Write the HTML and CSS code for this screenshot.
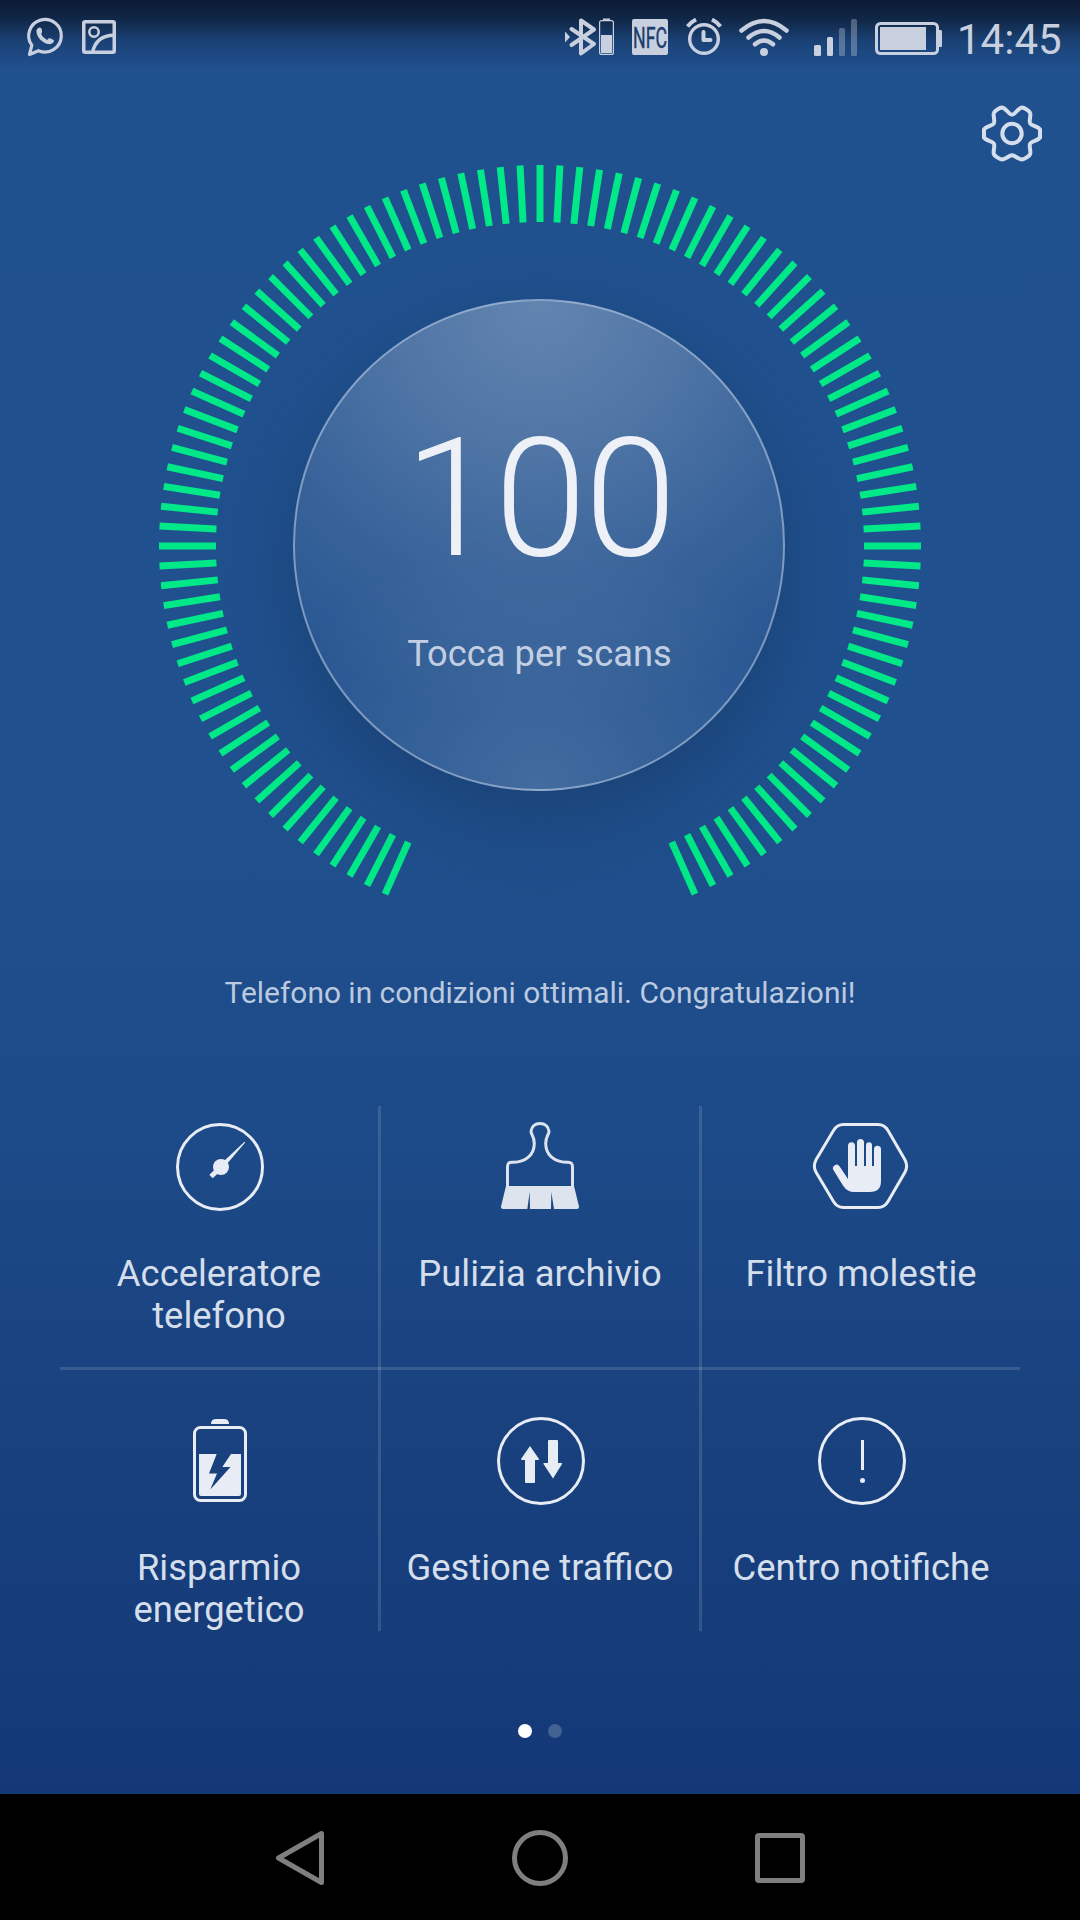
FILE: index.html
```
<!DOCTYPE html>
<html lang="it">
<head>
  <meta charset="UTF-8">
  <meta name="viewport" content="width=device-width, initial-scale=1.0">
  <title>Gestione telefono</title>
  <link rel="stylesheet" href="styles.css">
</head>
<body>
  <div class="app">
    <div class="statusbar">
      <svg class="st-whatsapp" width="36" height="40" viewBox="0 0 36 40" fill="none">
        <path d="M2.500 37.500 L4.800 28.300 A16.300 16.300 0 1 1 11.500 33.700 Z" stroke="currentColor" stroke-width="3.200" stroke-linejoin="round"/>
        <path d="M11 11.200 C12.500 10 14.300 10.700 14.800 12.600 C15.300 14.400 15.300 15.200 14.200 17 C15.500 19.800 17.500 21.700 20.300 22.900 C22 20.800 23 21 24.700 21.900 C27 23 27.500 23.300 26.500 25 C25.500 26.600 23.500 27.500 21 27 C15.500 26 10.500 21 9.500 15.500 C9.200 13.500 9.600 12.300 11 11.200 Z" fill="currentColor"/>
      </svg>
      <svg class="st-image" width="34" height="40" viewBox="0 0 34 40" fill="none" stroke="currentColor" stroke-width="3.500">
        <rect x="1.750" y="4.750" width="30.500" height="30.500" rx="1.500"/>
        <circle cx="12" cy="15" r="4.700" stroke-width="2.500"/>
        <path d="M10.500 35 C13 25 20 18.200 32 18.200"/>
      </svg>

      <div class="st-right">
        <svg class="st-bt" width="50" height="40" viewBox="0 0 50 40" fill="none">
          <path d="M0 14.500 L5 20 L0 25.500 Z" fill="currentColor"/>
          <path d="M6.500 12 L29 27 L16 36.500 V3.500 L29 12.500 L6.500 28" stroke="currentColor" stroke-width="4" stroke-linejoin="round" stroke-linecap="round"/>
          <rect x="34.600" y="3.600" width="13.800" height="33.800" rx="2" stroke="currentColor" stroke-width="1.200"/>
          <rect x="38" y="1.500" width="7" height="2" fill="currentColor"/>
          <rect x="36" y="18" width="11" height="18" fill="currentColor"/>
        </svg>
        <svg class="st-nfc" width="36" height="40" viewBox="0 0 36 40">
          <rect y="2" width="36" height="36" rx="2" fill="currentColor"/>
          <text class="nfc-text" x="1" y="30.500" textLength="34" lengthAdjust="spacingAndGlyphs">NFC</text>
        </svg>
        <svg class="st-alarm" width="36" height="40" viewBox="0 0 36 40" fill="none" stroke="currentColor">
          <circle cx="18" cy="22" r="14.300" stroke-width="3.400"/>
          <path d="M17.500 15 V23 H24.500" stroke-width="4" stroke-linecap="round" stroke-linejoin="round"/>
          <path d="M1.500 9.500 Q5 5 10 2.500 M34.500 9.500 Q31 5 26 2.500" stroke-width="4"/>
        </svg>
        <svg class="st-wifi" width="50" height="40" viewBox="0 0 50 40" fill="none" stroke="currentColor" stroke-width="4.500" stroke-linecap="round">
          <path d="M2.500 13.500 Q25 -5.500 47.500 13.500"/>
          <path d="M9.500 20.500 Q25 7.500 40.500 20.500"/>
          <path d="M16 27.300 Q25 19.700 34 27.300"/>
          <circle cx="25" cy="35" r="4" fill="currentColor" stroke="none"/>
        </svg>
        <svg class="st-signal" width="43" height="40" viewBox="0 0 43 40" fill="currentColor">
          <rect x="0" y="28" width="7" height="11" rx="1.500"/>
          <rect x="13" y="20" width="6" height="19" rx="1.500"/>
          <rect x="25" y="11" width="6" height="28" rx="1.500" opacity=".35"/>
          <rect x="37" y="2" width="6" height="37" rx="1.500" opacity=".35"/>
        </svg>
        <svg class="st-battery" width="67" height="40" viewBox="0 0 67 40">
          <rect x="1.500" y="6.500" width="61" height="30" rx="4" fill="none" stroke="currentColor" stroke-width="3"/>
          <rect x="5" y="10" width="46" height="23" fill="currentColor"/>
          <path d="M63.500 13 H66 Q67 13 67 14.500 V28.500 Q67 30 66 30 H63.500 Z" fill="currentColor"/>
        </svg>
        <span class="clock">14:45</span>
      </div>
    </div>

    <div class="toolbar">
      <svg class="gear" width="64" height="62" viewBox="0 0 64 62" fill="none" stroke="currentColor" stroke-width="4" stroke-linejoin="round">
        <path d="M32 11.700 C35 11.700 38 5 42 4.500 C44 4.500 50 8 50.300 10.500 C50.800 13.500 48.800 18 50.200 20.500 C51.700 23 58.500 23.500 60 26.500 V34.500 C58.500 37.500 51.700 38 50.200 40.500 C48.800 43 50.800 47.500 50.300 50.500 C50 53 44 56.500 42 56.500 C38 56 35 52.300 32 52.300 C29 52.300 26 56 22 56.500 C20 56.500 14 53 13.700 50.500 C13.200 47.500 15.200 43 13.800 40.500 C12.300 38 5.500 37.500 4 34.500 V26.500 C5.500 23.500 12.300 23 13.800 20.500 C15.200 18 13.200 13.500 13.700 10.500 C14 8 20 4.500 22 4.500 C26 5 29 11.700 32 11.700 Z"/>
        <circle cx="32" cy="30.500" r="9.700"/>
      </svg>
    </div>

    <div class="dial">
      <svg class="ring" width="762" height="762" viewBox="-381 -381 762 762">
        <g id="ticks"></g>
      </svg>
      <div class="scan">
        <span class="score">100</span>
        <span class="hint">Tocca per scans</span>
      </div>
    </div>

    <p class="message">Telefono in condizioni ottimali. Congratulazioni!</p>

    <div class="grid">
      <div class="item">
        <svg class="icon" viewBox="0 0 96 96" fill="none" stroke="currentColor" stroke-width="3">
          <circle cx="49" cy="48" r="42.500"/>
          <circle cx="50" cy="48" r="8" fill="currentColor" stroke="none"/>
          <path d="M40 57.500 L47 51" stroke-width="5"/>
          <path d="M52 43 L73.500 22.800 L74.200 23.500 L55 46 Z" fill="currentColor" stroke="none"/>
        </svg>
        <span class="label">Acceleratore<br>telefono</span>
      </div>
      <div class="item">
        <svg class="icon icon--brush" viewBox="0 0 96 96" fill="none" stroke="currentColor" stroke-width="3">
          <path d="M15.500 68 V48 Q15.500 43 20 43.200 C33 44 42.300 36 42.300 24.500 C42.300 17 39 15.500 39 12.500 C39.500 7.500 43 4.500 48 4.500 C53 4.500 56.500 7.500 57 12.500 C57 15.500 53.700 17 53.700 24.500 C53.700 36 63 44 76 43.200 Q80.500 43 80.500 48 V68"/>
          <path d="M14 67 H82 L87 87.500 Q87.300 90 85 90 H62 L59.300 73 L59 90 H38 L37.700 73 L35.300 90 H11 Q8.700 90 9 87.500 Z" fill="currentColor" stroke="none"/>
        </svg>
        <span class="label">Pulizia archivio</span>
      </div>
      <div class="item">
        <svg class="icon" viewBox="0 0 96 96" fill="none" stroke="currentColor" stroke-width="3">
          <path d="M30.500 5.500 H65 Q71.500 5.500 75 11.500 L91.800 40.500 Q95.500 47 91.800 53.500 L75 82.500 Q71.500 88.500 65 88.500 H30.500 Q24 88.500 20.500 82.500 L3.200 53.500 Q-.500 47 3.200 40.500 L20.500 11.500 Q24 5.500 30.500 5.500 Z"/>
          <path d="M35 60 V26.800 A3.500 3.500 0 0 1 42 26.800 V47 H44 V23.500 A3.500 3.500 0 0 1 51 23.500 V47 H53 V26.300 A3 3 0 0 1 59 26.300 V47 H61 V30.200 A3.500 3.500 0 0 1 68 30.200 V62 Q68 73 57 73 H41 Q34.500 73 30.300 67 L20.700 51.500 A3.500 3.500 0 0 1 26.500 47.300 Z" fill="currentColor" stroke="none"/>
        </svg>
        <span class="label">Filtro molestie</span>
      </div>
      <div class="item">
        <svg class="icon" viewBox="0 0 96 96" fill="none" stroke="currentColor" stroke-width="3">
          <rect x="23.500" y="14.500" width="51" height="73" rx="6"/>
          <path d="M40 11 Q40 6 45 6 H53 Q58 6 58 11 Z" fill="currentColor" stroke="none"/>
          <path d="M28 41 H45.700 L38 60.500 H46 L39.300 76.500 L59.500 54 H51.300 L60 41 H70 V81 Q70 83 68 83 H30 Q28 83 28 81 Z" fill="currentColor" stroke="none"/>
        </svg>
        <span class="label">Risparmio<br>energetico</span>
      </div>
      <div class="item">
        <svg class="icon" viewBox="0 0 96 96" fill="none" stroke="currentColor" stroke-width="3">
          <circle cx="49" cy="48" r="42.500"/>
          <path d="M38 33 L47 46 Q47 47 46 47 H43 V69 Q43 70 42 70 H34 Q33 70 33 69 V47 H30 Q29 47 29 46 Z" fill="currentColor" stroke="none"/>
          <path d="M61 65.500 L51.500 51 Q51 50 52 50 H56 V28 Q56 27 57 27 H65 Q66 27 66 28 V50 H69.500 Q70.500 50 70 51 Z" fill="currentColor" stroke="none"/>
        </svg>
        <span class="label">Gestione traffico</span>
      </div>
      <div class="item">
        <svg class="icon" viewBox="0 0 96 96" fill="none" stroke="currentColor" stroke-width="3">
          <circle cx="49" cy="48" r="42.500"/>
          <path d="M49.500 27 V57"/>
          <circle cx="49.500" cy="67.500" r="2.500" fill="currentColor" stroke="none"/>
        </svg>
        <span class="label">Centro notifiche</span>
      </div>
    </div>

    <div class="pager">
      <span class="dot dot--active"></span>
      <span class="dot"></span>
    </div>

    <div class="navbar">
      <svg width="56" height="60" viewBox="0 0 56 60">
        <path d="M49.500 5.500 V54.500 L6.500 30 Z"/>
      </svg>
      <svg width="60" height="60" viewBox="0 0 60 60">
        <circle cx="30" cy="30" r="25.500"/>
      </svg>
      <svg width="56" height="60" viewBox="0 0 56 60">
        <rect x="5.500" y="7.500" width="45" height="45" rx="1.500"/>
      </svg>
    </div>
  </div>

  <script>
    // one tick every 3 degrees, open at the bottom
    var ticks = document.getElementById('ticks')
    for (var deg = -156; deg <= 156; deg += 3) {
      var tick = document.createElementNS('http://www.w3.org/2000/svg', 'rect')
      tick.setAttribute('x', -3.5)
      tick.setAttribute('y', -381)
      tick.setAttribute('width', 7)
      tick.setAttribute('height', 57)
      tick.setAttribute('transform', 'rotate(' + deg + ')')
      ticks.appendChild(tick)
    }
  </script>
</body>
</html>
```

FILE: styles.css
```
* {
  box-sizing: border-box;
}
body {
  margin: 0;
  background: #000;
  font-family: Roboto, "Liberation Sans", sans-serif;
}
svg {
  display: block;
  flex: none;
  overflow: visible;
}
.app {
  width: 1080px;
  height: 1920px;
  display: flex;
  flex-direction: column;
  background: linear-gradient(#20518f 0, #20508d 800px, #1d4b89 1100px, #19427f 1400px, #143877 1794px);
}

/* status bar */
.statusbar {
  height: 75px;
  padding: 17px 17px 0 27px;
  display: flex;
  align-items: flex-start;
  color: #c8d0df;
  background: linear-gradient(#0c1a35 0, #0d1d39 6px, rgba(14, 33, 60, .85) 20px, rgba(20, 48, 90, .45) 42px, rgba(32, 80, 141, 0) 70px);
}
.st-image {
  margin-left: 19px;
}
.st-right {
  display: flex;
  margin-left: auto;
}
.st-nfc {
  margin-left: 17px;
}
.nfc-text {
  font-size: 29px;
  fill: #1b3c6c;
  stroke: #1b3c6c;
  stroke-width: .4px;
}
.st-alarm {
  margin-left: 18px;
}
.st-wifi {
  margin-left: 17px;
}
.st-signal {
  margin-left: 25px;
}
.st-battery {
  margin-left: 18px;
}
.clock {
  width: 106px;
  margin-left: 15px;
  font-size: 42px;
  line-height: 50px;
  margin-top: -2px;
  white-space: nowrap;
}

.toolbar {
  height: 90px;
  padding: 28px 36px 0 0;
  display: flex;
  justify-content: flex-end;
  color: #d5deec;
}

/* dial */
.dial {
  width: 762px;
  height: 762px;
  margin: 0 auto;
  display: grid;
  place-items: center;
}
.ring {
  grid-area: 1 / 1;
  fill: #00e887;
}
.scan {
  grid-area: 1 / 1;
  width: 492px;
  height: 492px;
  margin: 0 2px 2px 0;
  padding: 101px 0 0 1px;
  display: flex;
  flex-direction: column;
  align-items: center;
  border: 2px solid rgba(190, 205, 230, .55);
  border-radius: 50%;
  background:
    radial-gradient(circle at 50% 0, rgba(255, 255, 255, .27) 0, rgba(255, 255, 255, .19) 140px, rgba(255, 255, 255, .07) 290px, rgba(255, 255, 255, 0) 420px),
    radial-gradient(circle at 50% 100%, rgba(255, 255, 255, .12) 0, rgba(255, 255, 255, .055) 130px, rgba(255, 255, 255, 0) 270px),
    #295792;
  box-shadow: 0 30px 75px rgba(20, 50, 90, .45);
}
.score {
  font-size: 166px;
  font-weight: 300;
  line-height: 194px;
  letter-spacing: -2px;
  color: #edf1f7;
}
.hint {
  margin-top: 37px;
  font-size: 36.3px;
  line-height: 42px;
  color: #c2cfe2;
}
.message {
  margin: 46px 0 0;
  font-size: 29.9px;
  line-height: 40px;
  text-align: center;
  color: #bccae0;
}

/* shortcuts */
.grid {
  width: 960px;
  height: 525px;
  margin: 93px auto 0;
  display: grid;
  grid-template-columns: 318px 318px 318px;
  grid-template-rows: 294px 231px;
  column-gap: 3px;
  background:
    linear-gradient(rgba(255, 255, 255, .13), rgba(255, 255, 255, .13)) 318px 0 / 3px 100% no-repeat,
    linear-gradient(rgba(255, 255, 255, .13), rgba(255, 255, 255, .13)) 639px 0 / 3px 100% no-repeat,
    linear-gradient(rgba(255, 255, 255, .13), rgba(255, 255, 255, .13)) 0 261px / 100% 3px no-repeat;
}
.item {
  padding-top: 13px;
  display: flex;
  flex-direction: column;
  align-items: center;
}
.icon {
  width: 96px;
  height: 96px;
  color: #e8ecf4;
}
.icon--brush {
  color: #dde4ee;
}
.label {
  margin-top: 38px;
  font-size: 36.4px;
  line-height: 42px;
  text-align: center;
  white-space: nowrap;
  color: #d5deeb;
}

.pager {
  margin-top: 93px;
  padding-right: 1px;
  display: flex;
  justify-content: center;
  gap: 16px;
}
.dot {
  width: 14px;
  height: 14px;
  border-radius: 50%;
  background: rgba(255, 255, 255, .2);
}
.dot--active {
  background: #fff;
}

.navbar {
  height: 126px;
  margin-top: auto;
  padding: 2px 272px 0;
  display: flex;
  align-items: center;
  justify-content: space-between;
  background: #000;
  fill: none;
  stroke: #7f7f7f;
  stroke-width: 5;
  stroke-linejoin: round;
}
```
